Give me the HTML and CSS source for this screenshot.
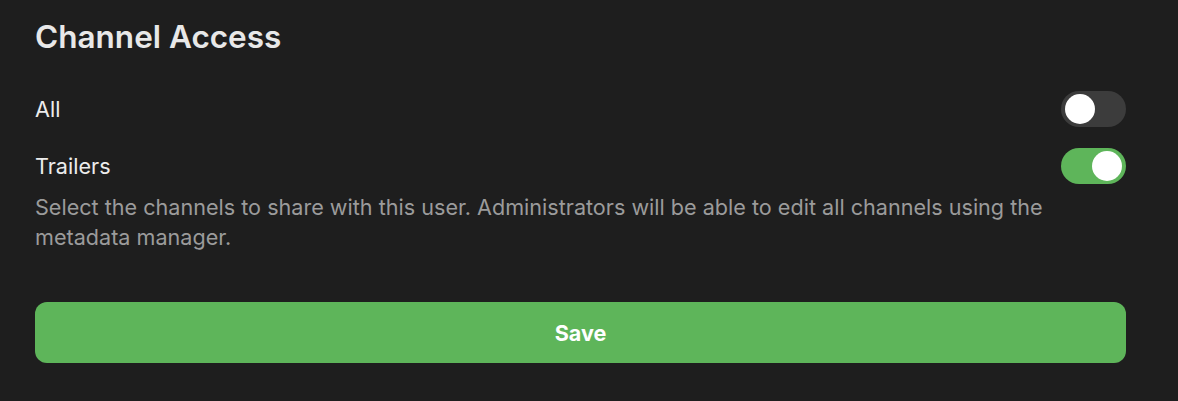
FILE: index.html
```html
<!DOCTYPE html>
<html>
<head>
<meta charset="utf-8">
<link rel="stylesheet" href="styles.css">
</head>
<body>
<div class="panel">
  <h2 class="title">Channel Access</h2>
  <div class="row row-first">
    <span class="label">All</span>
    <span class="toggle"><span class="knob"></span></span>
  </div>
  <div class="row">
    <span class="label">Trailers</span>
    <span class="toggle on"><span class="knob"></span></span>
  </div>
  <p class="desc">Select the channels to share with this user. Administrators will be able to edit all channels using the metadata manager.</p>
  <button class="save">Save</button>
</div>
</body>
</html>
```
FILE: styles.css
```css
html, body {
  margin: 0;
  background: #1e1e1e;
}
body {
  font-family: Inter, "Noto Sans", sans-serif;
  color: #e6e6e6;
}
.panel {
  padding: 19px 52px 0 35px;
  display: flex;
  flex-direction: column;
}
.title {
  margin: 0;
  font-size: 31.5px;
  line-height: 36px;
  font-weight: 600;
  color: #e8e8e8;
}
.row {
  display: flex;
  align-items: center;
  justify-content: space-between;
  height: 36px;
}
.row-first {
  margin-top: 36px;
  margin-bottom: 21px;
}
.label {
  font-size: 21.6px;
  color: #ececec;
}
.toggle {
  width: 65px;
  height: 36px;
  border-radius: 18px;
  background: #3c3c3c;
  display: flex;
  align-items: center;
  padding: 0 4px;
  box-sizing: border-box;
}
.toggle.on {
  background: #5eb55a;
  justify-content: flex-end;
}
.knob {
  width: 30px;
  height: 30px;
  border-radius: 50%;
  background: #ffffff;
}
.desc {
  margin: 8px 0 0;
  font-size: 21.6px;
  line-height: 30px;
  color: #9b9b9b;
  max-width: 1040px;
}
.save {
  margin-top: 50px;
  height: 61px;
  border: none;
  border-radius: 12px;
  background: #5eb55a;
  color: #ffffff;
  font-family: Inter, "Noto Sans", sans-serif;
  font-size: 21.6px;
  font-weight: 700;
}
```
